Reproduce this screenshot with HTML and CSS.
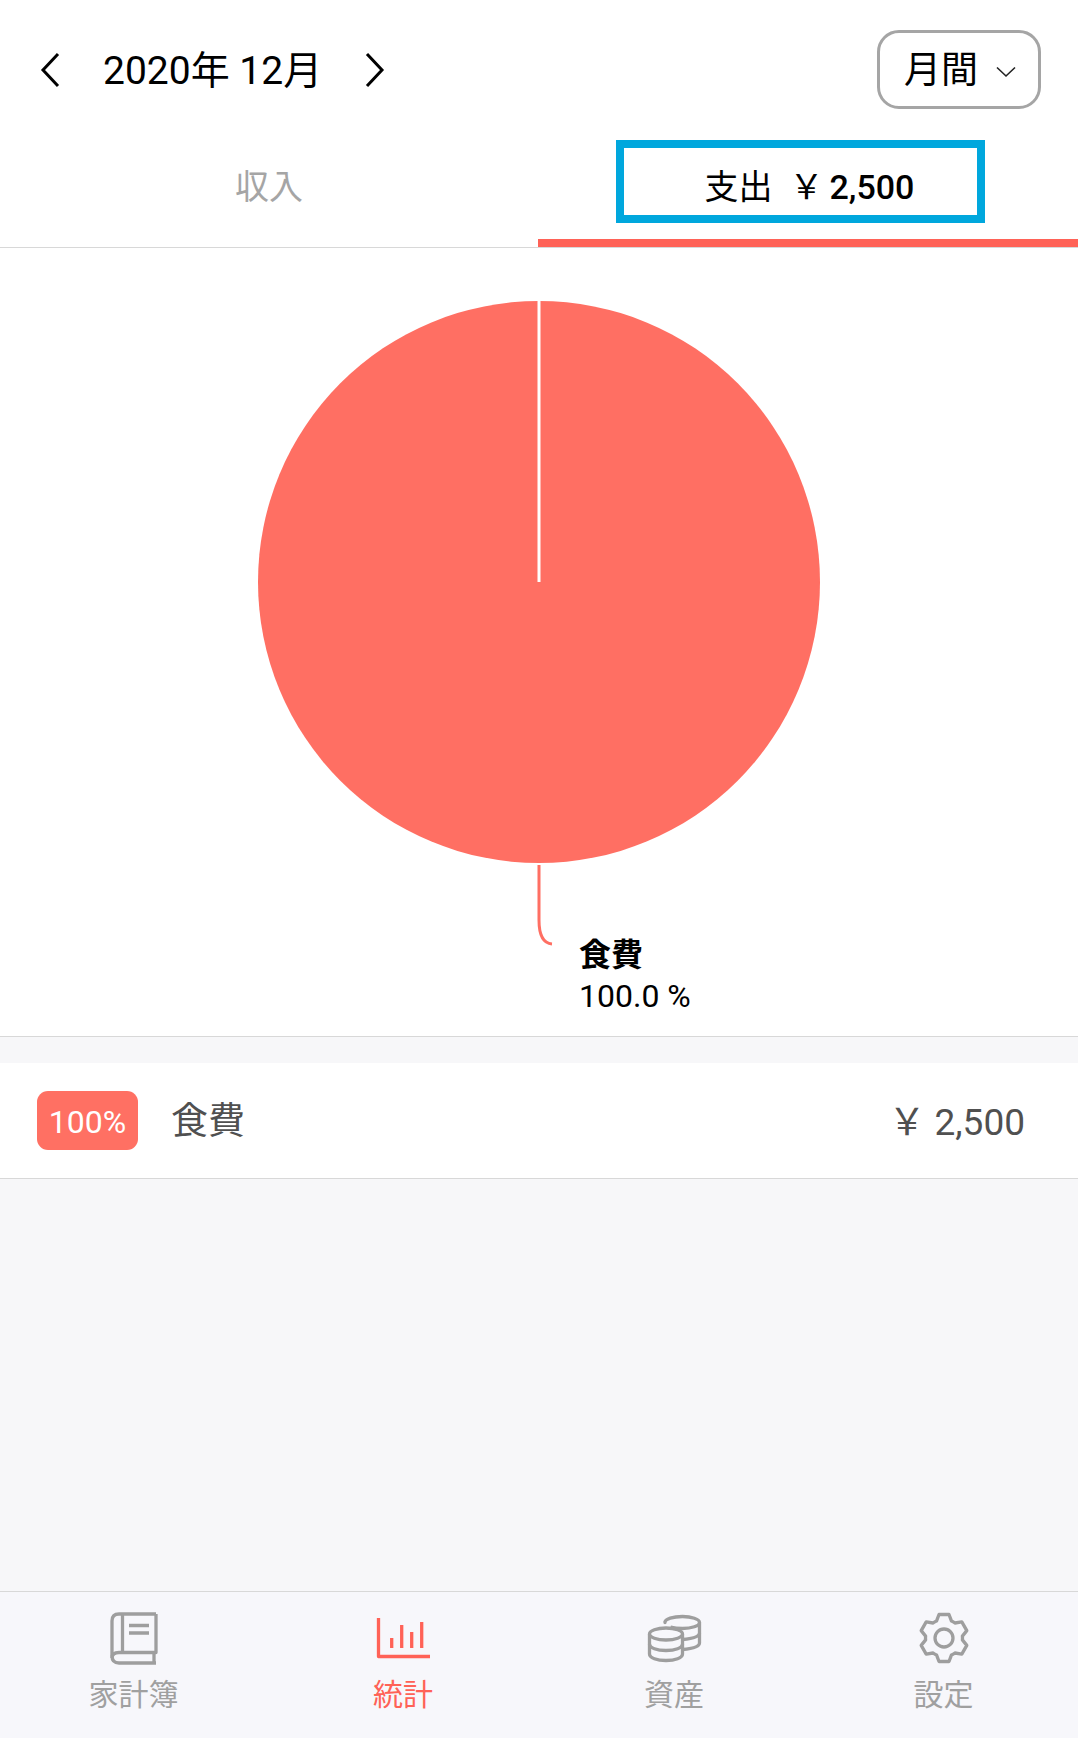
FILE: index.html
```html
<!DOCTYPE html>
<html lang="ja">
<head>
  <meta charset="UTF-8">
  <meta name="viewport" content="width=device-width, initial-scale=1.0">
  <title>統計</title>
  <link rel="stylesheet" href="styles.css">
</head>
<body>
  <div class="page">
    <header class="header">
      <div class="month-nav">
        <svg class="chevron" viewBox="0 0 20 36"><path d="M18 2 L3 18 L18 34"/></svg>
        <span class="month-title">2020年 12月</span>
        <svg class="chevron" viewBox="0 0 20 36"><path d="M2 2 L17 18 L2 34"/></svg>
      </div>
      <div class="period-select">
        <span>月間</span>
        <svg class="caret" viewBox="0 0 20 12"><path d="M1 1.5 L10 10 L19 1.5"/></svg>
      </div>
    </header>

    <div class="tabs">
      <div class="tab">収入</div>
      <div class="tab tab-active">
        <span class="highlight"></span>
        <span>支出</span>
        <span class="tab-yen">&#xFFE5;</span>
        <b class="tab-sum">2,500</b>
      </div>
    </div>

    <section class="chart">
      <svg class="pie" viewBox="0 0 1078 788">
        <circle cx="539" cy="334" r="281" fill="#ff6f63"/>
        <rect x="537.5" y="53" width="3" height="281" fill="#ffffff"/>
        <path d="M539 617 V672 Q539 695 552 696" fill="none" stroke="#ff6f63" stroke-width="3"/>
      </svg>
      <div class="chart-label">
        <div class="chart-label-name">食費</div>
        <div class="chart-label-pct">100.0 %</div>
      </div>
    </section>

    <div class="row">
      <span class="badge">100%</span>
      <span class="row-name">食費</span>
      <span class="row-sum"><span class="row-yen">&#xFFE5;</span>2,500</span>
    </div>

    <div class="spacer"></div>

    <nav class="tabbar">
      <div class="tabbar-item">
        <svg class="icon" viewBox="0 0 60 60">
          <path d="M52 6 H15 Q8 6 8 13 V48 Q8 55 15 55 H52"/>
          <path d="M52 6 V44.5 H15 Q8 44.5 8 50"/>
          <path d="M18.5 6 V44"/>
          <path d="M25 17.5 H45 M25 25 H45"/>
          <path d="M50 45 V55"/>
        </svg>
        <span>家計簿</span>
      </div>
      <div class="tabbar-item tabbar-active">
        <svg class="icon" viewBox="0 0 60 60">
          <path d="M5.5 10 V48.5 H57"/>
          <path d="M18.7 30 V40 M28.7 17 V40 M38.7 24 V40 M48.7 14 V40"/>
        </svg>
        <span>統計</span>
      </div>
      <div class="tabbar-item">
        <svg class="icon" viewBox="0 0 60 60">
          <ellipse cx="22" cy="26" rx="16.5" ry="6"/>
          <path d="M5.5 26 V46 C5.5 50 13 52.5 22 52.5 C31 52.5 38.5 50 38.5 46 V26"/>
          <path d="M5.5 36 C5.5 40 13 42.5 22 42.5 C31 42.5 38.5 40 38.5 36"/>
          <path d="M21 13 V14.5 C21 11 29 8.5 38.5 8.5 C47.5 8.5 55.5 11 55.5 14.5 C55.5 18 47.5 20.5 38.5 20.5 C34 20.5 30 20 26.5 19"/>
          <path d="M55.5 14.5 V35 C55.5 38.5 49 40.5 38.5 41.5"/>
          <path d="M55.5 25 C55.5 28.5 49 30.5 38.5 31.5"/>
        </svg>
        <span>資産</span>
      </div>
      <div class="tabbar-item">
        <svg class="icon" viewBox="0 0 60 60">
          <path d="M22.5 13.1 L25 6.5 H35 L37.5 13.1 A18.5 18.5 0 0 1 40.9 15 L47.8 13.9 L52.8 22.6 L48.4 28.1 A18.5 18.5 0 0 1 48.4 31.9 L52.8 37.4 L47.8 46.1 L40.9 45 A18.5 18.5 0 0 1 37.5 46.9 L35 53.5 H25 L22.5 46.9 A18.5 18.5 0 0 1 19.1 45 L12.2 46.1 L7.2 37.4 L11.6 31.9 A18.5 18.5 0 0 1 11.6 28.1 L7.2 22.6 L12.2 13.9 L19.1 15 A18.5 18.5 0 0 1 22.5 13.1 Z"/>
          <circle cx="30" cy="30" r="9"/>
        </svg>
        <span>設定</span>
      </div>
    </nav>
  </div>
</body>
</html>
```

FILE: styles.css
```css
* {
    box-sizing: border-box;
}

body {
    margin: 0;
    font-family: Roboto, "Noto Sans CJK JP", sans-serif;
    background-color: #f7f7f9;
    color: #000000;
}

.page {
    display: flex;
    flex-direction: column;
    height: 1738px;
    overflow: hidden;
}

/* header */
.header {
    display: flex;
    align-items: center;
    justify-content: space-between;
    height: 140px;
    padding: 0 37px 1px 40px;
    background-color: #ffffff;
}

.month-nav {
    display: flex;
    align-items: center;
    gap: 43px;
}

.chevron {
    width: 20px;
    height: 36px;
    fill: none;
    stroke: #000000;
    stroke-width: 3;
}

.month-title {
    margin-top: 2px;
    font-size: 39px;
    line-height: 44px;
}

.period-select {
    display: flex;
    align-items: center;
    gap: 18px;
    width: 164px;
    height: 79px;
    padding-left: 24px;
    border: 3px solid #a5a5a5;
    border-radius: 22px;
    font-size: 37px;
}

.period-select span {
    margin-top: 2px;
    line-height: 48px;
}

.caret {
    width: 20px;
    height: 12px;
    margin-top: 5px;
    fill: none;
    stroke: #222222;
    stroke-width: 1.6;
}

/* tabs */
.tabs {
    display: grid;
    grid-template-columns: 538px 540px;
    height: 108px;
    background-color: #ffffff;
    border-bottom: 1px solid #d8d8d8;
}

.tab {
    display: flex;
    align-items: flex-start;
    justify-content: center;
    padding-top: 27px;
    font-size: 34px;
    line-height: 40px;
    color: #a5a5a5;
}

.tab-active {
    position: relative;
    border-bottom: 8px solid #ff6257;
    padding-left: 3px;
    color: #000000;
}

.highlight {
    position: absolute;
    left: 78px;
    top: 0;
    width: 369px;
    height: 83px;
    border: 8px solid #00a7dd;
}

.tab-yen {
    margin-left: 17px;
}

.tab-sum {
    margin-left: 6px;
    font-size: 34px;
    font-weight: 500;
}

/* pie */
.chart {
    position: relative;
    height: 789px;
    background-color: #ffffff;
    border-bottom: 1px solid #d8d8d8;
}

.pie {
    display: block;
    width: 1078px;
    height: 788px;
}

.chart-label {
    position: absolute;
    left: 579px;
    top: 685px;
}

.chart-label-name {
    font-size: 32px;
    font-weight: 700;
    line-height: 44px;
}

.chart-label-pct {
    font-size: 32px;
    line-height: 38px;
}

/* category row */
.row {
    display: flex;
    align-items: center;
    height: 116px;
    margin-top: 26px;
    padding: 0 53px 0 37px;
    background-color: #ffffff;
    border-bottom: 1px solid #d8d8d8;
    color: #505050;
}

.badge {
    width: 101px;
    height: 59px;
    border-radius: 11px;
    background-color: #ff7063;
    color: #ffffff;
    font-size: 32px;
    line-height: 63px;
    text-align: center;
}

.row-name {
    margin-left: 33px;
    margin-bottom: 5px;
    font-size: 37px;
}

.row-sum {
    margin-left: auto;
    margin-top: -4px;
    font-size: 37px;
}

.row-yen {
    margin-right: 9px;
}

.spacer {
    flex: 1;
}

/* bottom bar */
.tabbar {
    display: grid;
    grid-template-columns: 267px 272px 270px 269px;
    height: 147px;
    padding-top: 16px;
    background-color: #f7f7fb;
    border-top: 1px solid #d8d8d8;
}

.tabbar-item {
    display: flex;
    flex-direction: column;
    align-items: center;
    font-size: 30px;
    line-height: 40px;
    color: #a0a0a0;
}

.icon {
    width: 60px;
    height: 60px;
    margin-bottom: 7px;
    fill: none;
    stroke: #9e9e9e;
    stroke-width: 3.3;
    stroke-linejoin: round;
}

.tabbar-active {
    color: #ff6257;
}

.tabbar-active .icon {
    stroke: #ff6257;
}
```
